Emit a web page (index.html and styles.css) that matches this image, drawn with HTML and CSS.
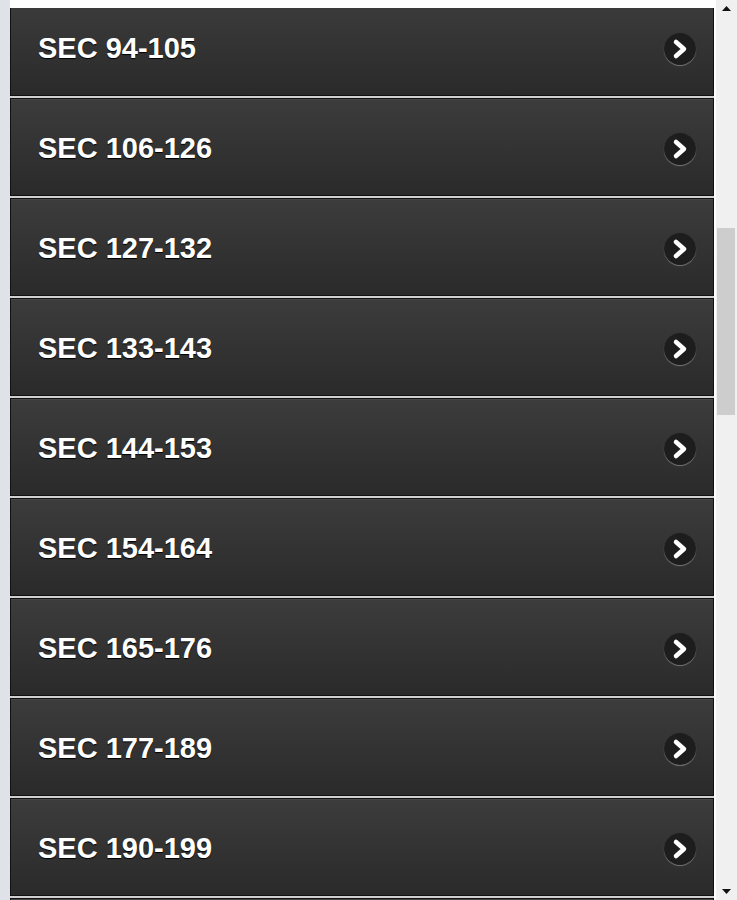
FILE: index.html
```html
<!DOCTYPE html>
<html>
<head>
<meta charset="utf-8">
<link rel="stylesheet" href="styles.css">
</head>
<body>
<div class="frame">
  <div class="edge"></div>
  <div class="main">
    <div class="viewport">
      <ul class="list">
        <li class="item"><span class="label">SEC 94-105</span><span class="icon"><svg viewBox="-16 -16 32 32" width="32" height="32"><path d="M-4 -7 L4 0 L-4 7" /></svg></span></li>
        <li class="item"><span class="label">SEC 106-126</span><span class="icon"><svg viewBox="-16 -16 32 32" width="32" height="32"><path d="M-4 -7 L4 0 L-4 7" /></svg></span></li>
        <li class="item"><span class="label">SEC 127-132</span><span class="icon"><svg viewBox="-16 -16 32 32" width="32" height="32"><path d="M-4 -7 L4 0 L-4 7" /></svg></span></li>
        <li class="item"><span class="label">SEC 133-143</span><span class="icon"><svg viewBox="-16 -16 32 32" width="32" height="32"><path d="M-4 -7 L4 0 L-4 7" /></svg></span></li>
        <li class="item"><span class="label">SEC 144-153</span><span class="icon"><svg viewBox="-16 -16 32 32" width="32" height="32"><path d="M-4 -7 L4 0 L-4 7" /></svg></span></li>
        <li class="item"><span class="label">SEC 154-164</span><span class="icon"><svg viewBox="-16 -16 32 32" width="32" height="32"><path d="M-4 -7 L4 0 L-4 7" /></svg></span></li>
        <li class="item"><span class="label">SEC 165-176</span><span class="icon"><svg viewBox="-16 -16 32 32" width="32" height="32"><path d="M-4 -7 L4 0 L-4 7" /></svg></span></li>
        <li class="item"><span class="label">SEC 177-189</span><span class="icon"><svg viewBox="-16 -16 32 32" width="32" height="32"><path d="M-4 -7 L4 0 L-4 7" /></svg></span></li>
        <li class="item"><span class="label">SEC 190-199</span><span class="icon"><svg viewBox="-16 -16 32 32" width="32" height="32"><path d="M-4 -7 L4 0 L-4 7" /></svg></span></li>
        <li class="item"></li>
      </ul>
    </div>
  </div>
  <div class="scrollbar">
    <div class="arrow"><svg width="9" height="5" viewBox="0 0 9 5"><polygon points="0,5 9,5 4.5,0" /></svg></div>
    <div class="track"><div class="thumb"></div></div>
    <div class="arrow"><svg width="9" height="5" viewBox="0 0 9 5"><polygon points="0,0 9,0 4.5,5" /></svg></div>
  </div>
</div>
</body>
</html>
```

FILE: styles.css
```css
html, body {
  margin: 0;
  padding: 0;
  background: #ffffff;
}

.frame {
  display: flex;
  width: 737px;
  height: 900px;
  overflow: hidden;
}

.edge {
  width: 10px;
  flex: none;
  background: #dfe3e9;
}

.main {
  width: 704px;
  flex: none;
  padding-top: 8px;
  box-sizing: border-box;
  display: flex;
  flex-direction: column;
}

.viewport {
  flex: 1;
  overflow: hidden;
  background: #cfcfcf;
}

.list {
  list-style: none;
  margin: -10px 0 0 0;
  padding: 0;
  display: flex;
  flex-direction: column;
  gap: 2px;
}

.item {
  height: 98px;
  box-sizing: border-box;
  border: 1px solid #111111;
  background: linear-gradient(#3c3c3c, #2a2a2a);
  box-shadow: inset 0 1px 0 #474747;
  display: flex;
  align-items: center;
  justify-content: space-between;
  padding: 0 17px 0 27px;
}

.label {
  font-family: "Liberation Sans", Arial, sans-serif;
  font-weight: bold;
  font-size: 29px;
  color: #ffffff;
  text-shadow: 0 1px 1px #000000;
  padding-top: 2px;
}

.icon {
  width: 32px;
  height: 32px;
  margin-top: 4px;
  border-radius: 50%;
  background: #1d1d1d;
  box-shadow: 0 1px 1px rgba(255, 255, 255, 0.35);
  display: flex;
}

.icon svg path {
  fill: none;
  stroke: #ffffff;
  stroke-width: 4.5;
  stroke-linecap: round;
  stroke-linejoin: round;
}

.scrollbar {
  width: 21px;
  flex: none;
  margin-left: 2px;
  background: #f0f0f0;
  display: flex;
  flex-direction: column;
}

.arrow {
  height: 17px;
  display: flex;
  align-items: center;
  justify-content: center;
}

.arrow svg polygon {
  fill: #111111;
}

.track {
  flex: 1;
  padding-top: 211px;
}

.thumb {
  width: 18px;
  height: 187px;
  margin-left: 1px;
  background: #cdcdcd;
}
```
